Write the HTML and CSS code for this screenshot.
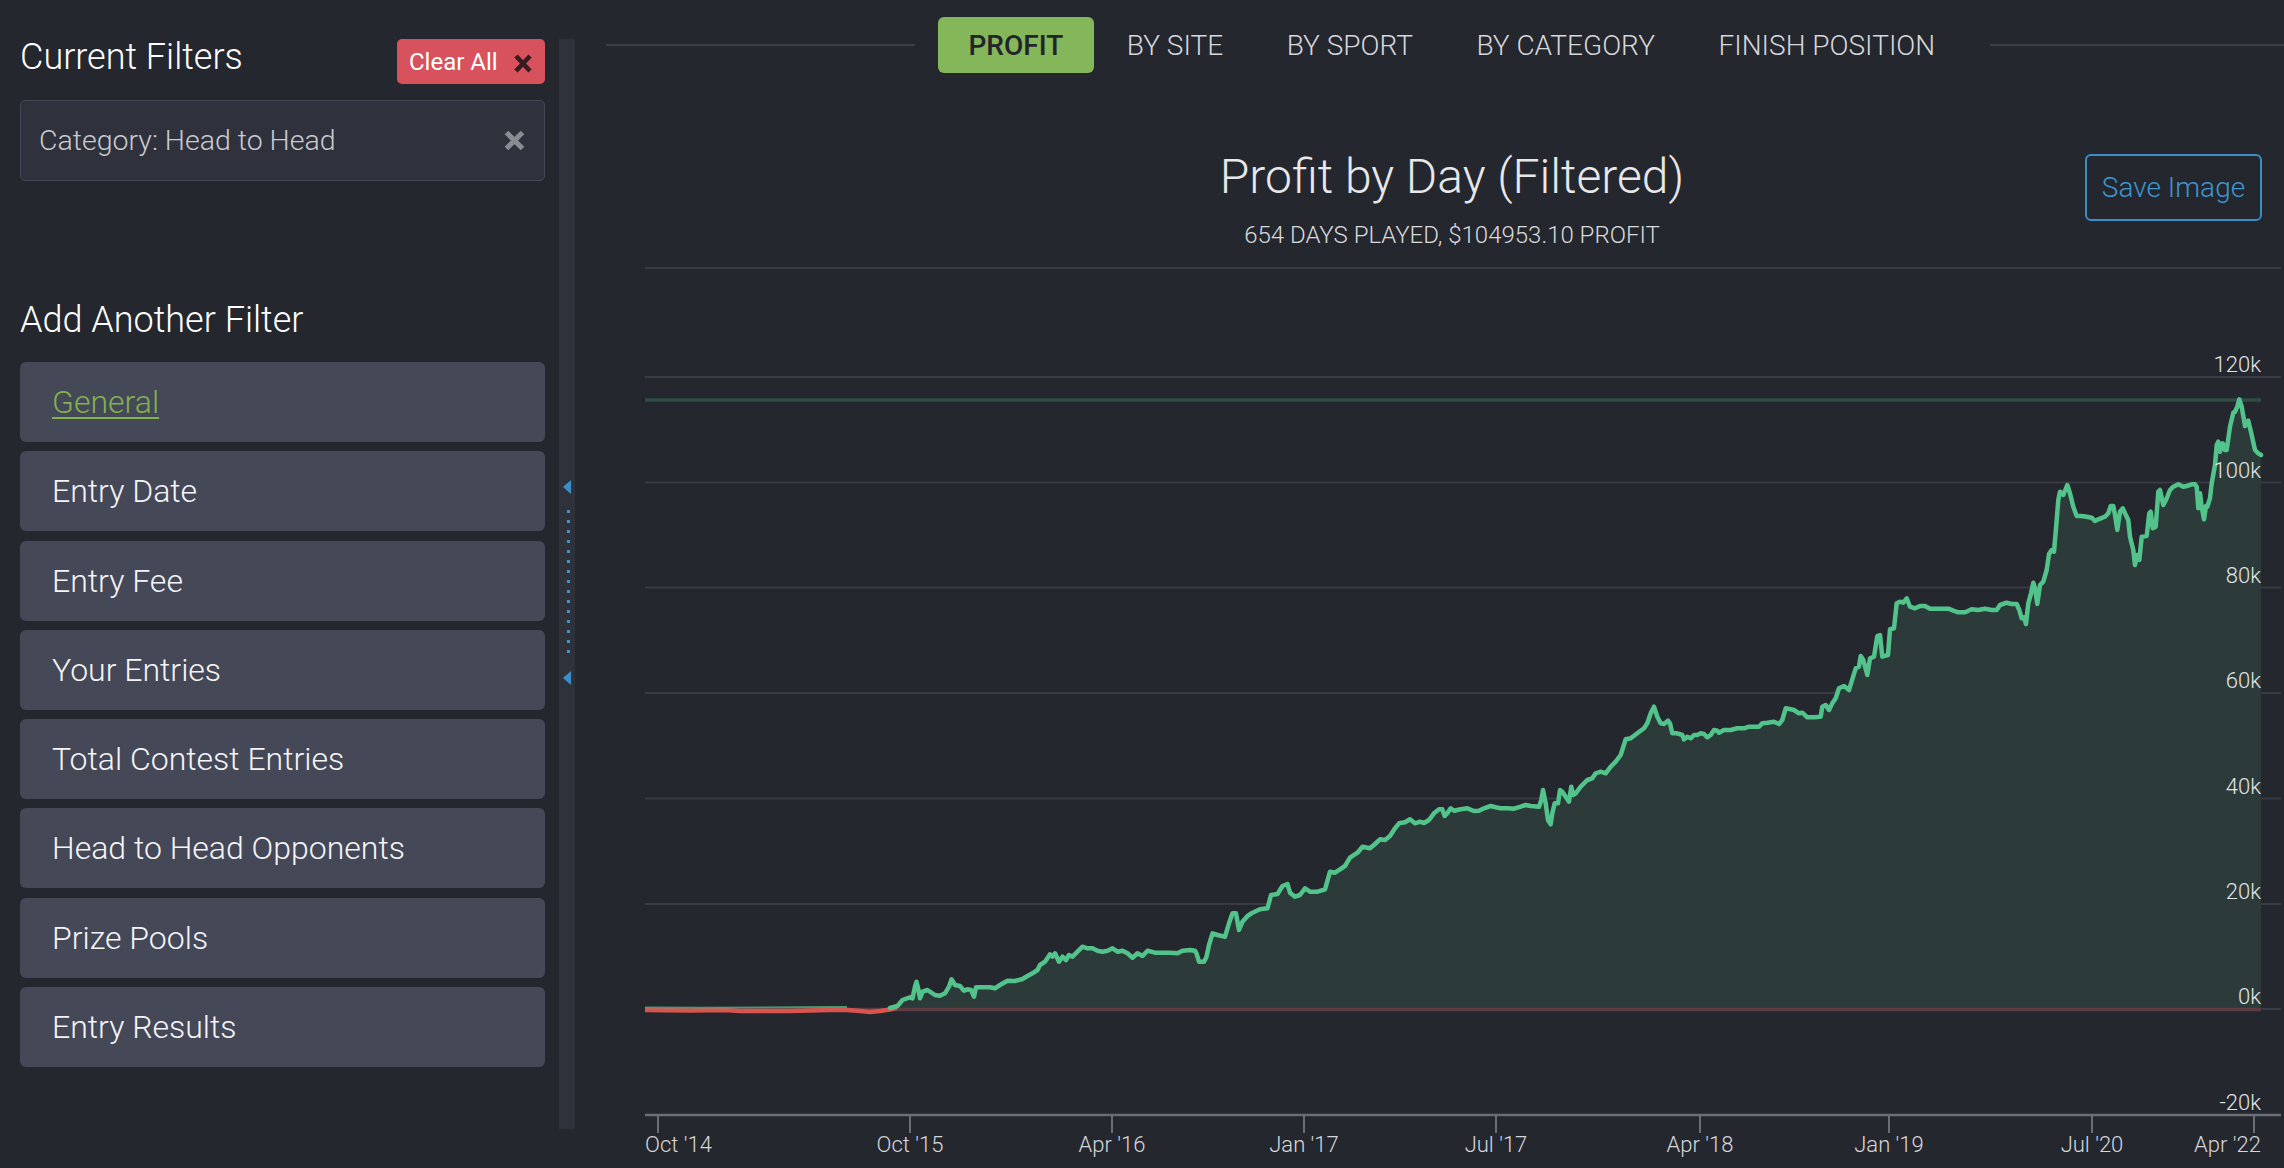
FILE: index.html
```html
<!DOCTYPE html>
<html>
<head>
<meta charset="utf-8">
<title>Profit by Day</title>
<link rel="stylesheet" href="styles.css">
</head>
<body>
<div class="app">
  <aside class="sidebar">
    <div class="filters-head">
      <h2 class="side-title">Current Filters</h2>
      <button class="btn-clear">Clear All
        <svg class="clear-x" width="18" height="19" viewBox="0 0 18 19"><path d="M2 2 L16 17 M16 2 L2 17" stroke="#3a1b22" stroke-width="4.6" fill="none"/></svg>
      </button>
    </div>
    <div class="filter-chip">
      <span>Category: Head to Head</span>
      <svg width="21" height="21" viewBox="0 0 21 21"><path d="M2.5 2.5 L18.5 18.5 M18.5 2.5 L2.5 18.5" stroke="#8a8c93" stroke-width="5.2" fill="none"/></svg>
    </div>
    <h2 class="side-title add-title">Add Another Filter</h2>
    <div class="filter-list">
      <div class="filter-btn"><span class="link">General</span></div>
      <div class="filter-btn">Entry Date</div>
      <div class="filter-btn">Entry Fee</div>
      <div class="filter-btn">Your Entries</div>
      <div class="filter-btn">Total Contest Entries</div>
      <div class="filter-btn">Head to Head Opponents</div>
      <div class="filter-btn">Prize Pools</div>
      <div class="filter-btn">Entry Results</div>
    </div>
  </aside>
  <div class="splitter">
    <span class="tri"></span>
    <span class="dots"></span>
    <span class="tri tri2"></span>
  </div>
  <main class="main">
    <nav class="nav">
      <span class="nav-line left"></span>
      <span class="nav-item active">Profit</span>
      <span class="nav-item">By Site</span>
      <span class="nav-item">By Sport</span>
      <span class="nav-item">By Category</span>
      <span class="nav-item">Finish Position</span>
      <span class="nav-line right"></span>
    </nav>
    <section class="chart-wrap">
      <div class="chart-head">
        <div class="chart-titles">
          <div class="chart-title">Profit by Day (Filtered)</div>
          <div class="chart-sub">654 DAYS PLAYED, $104953.10 PROFIT</div>
        </div>
        <button class="save-btn">Save Image</button>
      </div>
      <svg class="chart" width="1664" height="918" viewBox="620 250 1664 918">
        <g stroke="#393b44" stroke-width="2">
          <line x1="645" y1="268" x2="2281" y2="268"/>
          <line x1="645" y1="377" x2="2281" y2="377"/>
          <line x1="645" y1="482.5" x2="2281" y2="482.5"/>
          <line x1="645" y1="587.5" x2="2281" y2="587.5"/>
          <line x1="645" y1="693" x2="2281" y2="693"/>
          <line x1="645" y1="798.5" x2="2281" y2="798.5"/>
          <line x1="645" y1="904" x2="2281" y2="904"/>
          <line x1="645" y1="1009" x2="2281" y2="1009"/>
        </g>
        <path fill="#2c3b3a" d="M645,1009 L645,1008 690,1008.5 725,1008 740,1009 790,1009 830,1008 847,1008 860,1009.5 870,1010 880,1009.5 890,1008 897.5,1006 902.5,1000 910,997.3 912.5,998.3 915,986.7 916.5,981.7 918.5,990 920,998.3 922.5,991.7 927.5,990 935,995 940,995.7 945,993.3 949,986.7 951.5,979.3 955,985 960,986 964,990.7 967.5,989.3 971,990 974,996.7 976,987.3 982.5,987.3 990,987.3 995,988.3 1000,985 1007.5,980.7 1015,981 1022.5,979 1027.5,976 1032.5,973.3 1037.5,970 1040,965 1045,961.7 1050,954.3 1052.5,956.7 1055,953.3 1059,961.7 1062.5,956.7 1066,960 1069,955 1072.5,956.7 1077.5,951.7 1082.5,946.7 1087.5,948.3 1092.5,948.3 1097.5,950.7 1102.5,951.7 1107.5,950.7 1112.5,948.3 1117.5,951.7 1122.5,950.7 1127.5,953.3 1132.5,957.7 1137.5,953.3 1142.5,956 1147.5,950.7 1155,952.7 1170,952.7 1177.5,953.3 1182.5,950.7 1190,950 1195,950.7 1196.5,953.3 1199,961.7 1204,961.7 1206.5,956.7 1209,945 1212.5,933.3 1217.5,935 1225,936.7 1229,923.3 1232.5,913.3 1236,913.3 1239,930 1242.5,921.7 1247.5,916 1252.5,912.7 1260,909.3 1267.5,908.3 1271,895 1277.5,894 1282.5,886 1287.5,884 1290,892.7 1295,896.7 1300,895 1305,888.3 1310,891.7 1317.5,891.7 1325,889.3 1330,871.7 1335,872.7 1340,869.3 1345,866 1350,857.7 1357.5,852.7 1362.5,846.7 1370,848.3 1375,844 1380,839.3 1385,840 1390,836 1395,828.3 1399,823.3 1405,822.3 1410,819.3 1415,823.3 1420,821.7 1424,823 1429,820 1434,813.3 1439,809.3 1442.3,809.3 1444.7,816 1447.3,813.3 1450.7,808.3 1454,810.7 1460.7,809.3 1467.3,808.3 1474,811 1479,810.7 1484,808.3 1490.7,806 1495.7,807.3 1500.7,808.3 1507.3,808.3 1514,808.7 1520.7,806.7 1525.7,805 1530.7,806 1539,806.7 1541.3,800 1543,790 1545.7,803.3 1548,820 1550.7,824.3 1552.3,813.3 1554.7,803.3 1558,803.3 1560,790 1562.3,791.7 1565.7,796.7 1569,801.7 1571.3,786.7 1573.3,795 1575.7,793.3 1580.7,786.7 1587.3,780 1592.3,778.3 1595.7,773.3 1600.7,771.7 1605.7,773.3 1610.7,766.7 1615.7,761.7 1620.7,755 1625.7,739.3 1630.7,738.3 1637.3,733.3 1644,728.3 1647.3,723.3 1650.7,713.3 1654,706.7 1657.3,716.7 1660.7,723.3 1664,724 1668,720.7 1670,723.3 1672.3,733.3 1677.3,733.3 1682.3,735 1684,739.3 1687.3,736.7 1690.7,738.3 1694,735 1697.3,735 1700.7,733.3 1704,734 1707.3,737.3 1710.7,735 1714,730 1717.3,730.7 1719,732.7 1724,730 1730.7,730 1737.3,728.3 1744,728.3 1749,726.7 1754,726.7 1759,726.7 1762.3,723.3 1767.3,722.7 1774,721.7 1779,724 1782.3,720 1785.7,708.3 1790.7,709.3 1794,710 1799,713.3 1802.3,712.7 1807.3,717.3 1814,717.3 1820.7,716.7 1822.3,706.7 1825.7,705 1829,710 1832.3,703.3 1835.7,698.3 1839,688.3 1844,686 1849,690 1852.3,679.3 1855.7,668.3 1859,666.7 1860.7,656 1863.3,660 1867.3,675 1870,658.3 1874,656.7 1877.3,636 1880,635 1882.3,656.7 1888,655 1890,629.3 1894,628.3 1896.7,603.3 1900,601.7 1903.3,602.7 1906.7,598.3 1910,606.7 1915,608.3 1920,606 1925,606 1930,608.7 1936.7,608.7 1943.3,608.7 1948.3,608.7 1953.3,610.7 1958.3,612.3 1965,612.3 1971.7,609.3 1978.3,610 1985,608.7 1991.7,610 1996.7,610 2000,605 2006.7,602.7 2011.7,604 2016.7,604 2019.3,610 2021.7,618.3 2024,617.3 2026,624 2028.3,603.3 2031,593.3 2033.3,582.7 2035,588.3 2037.3,604 2040,585 2043.3,581.7 2046.7,570 2049,554 2051.7,550 2054,551.7 2056.7,520 2058.3,500 2060,491.7 2063.3,495 2067.3,485 2070,493.3 2073.3,506.7 2076.7,516 2081.7,516 2086.7,516.7 2091.7,517.7 2095,521 2098.3,519.3 2105,516.7 2108.3,513.3 2110.7,506 2113.3,506 2115,515 2117.3,530 2120,511.7 2122.7,508.3 2125,513.3 2128.3,520 2130,536.7 2133.3,550 2135,565 2137.3,555 2139.3,560 2141.7,536.7 2146.7,536 2149.3,513.3 2150.7,511.7 2152.7,528.3 2155.7,526.7 2158.3,491.7 2160,490 2163.3,505 2166,500 2170,490 2173.3,486.7 2178.3,484.3 2183.3,486.7 2186.7,486 2191.7,484.3 2195,484.3 2196.7,486.7 2198.3,508.3 2200,493.3 2201.7,506.7 2204,519.3 2206,506 2207.3,506.7 2210,498.3 2211.7,483.3 2215,465 2216.7,445 2218.3,441.7 2220,451.7 2222.7,443.3 2225,450 2226.7,450 2230,426.7 2233.3,412.7 2235,411.7 2237.3,406.7 2239.3,399.3 2241.7,406.7 2245,426 2248.3,420.7 2251.7,435 2255,450 2258.3,453.3 2261,455 L2261,1009 Z"/>
        <line x1="645" y1="400" x2="2261" y2="400" stroke="#2f4d43" stroke-width="3.5"/>
        <line x1="645" y1="1009.5" x2="2261" y2="1009.5" stroke="#5c3c42" stroke-width="3.5"/>
        <polyline fill="none" stroke="#d9544f" stroke-width="4.5" stroke-linejoin="round" points="645,1010 690,1010.5 725,1010 740,1011 790,1011 830,1010 847,1010 860,1011 870,1012 880,1011 890,1009.5 897,1007.5"/>
        <polyline fill="none" stroke="#52c48b" stroke-width="1.8" opacity="0.7" points="645,1007.3 700,1007.6 760,1007.3 830,1007 847,1007"/>
        <polyline fill="none" stroke="#52c48b" stroke-width="4.5" stroke-linejoin="round" stroke-linecap="round" points="890,1008 897.5,1006 902.5,1000 910,997.3 912.5,998.3 915,986.7 916.5,981.7 918.5,990 920,998.3 922.5,991.7 927.5,990 935,995 940,995.7 945,993.3 949,986.7 951.5,979.3 955,985 960,986 964,990.7 967.5,989.3 971,990 974,996.7 976,987.3 982.5,987.3 990,987.3 995,988.3 1000,985 1007.5,980.7 1015,981 1022.5,979 1027.5,976 1032.5,973.3 1037.5,970 1040,965 1045,961.7 1050,954.3 1052.5,956.7 1055,953.3 1059,961.7 1062.5,956.7 1066,960 1069,955 1072.5,956.7 1077.5,951.7 1082.5,946.7 1087.5,948.3 1092.5,948.3 1097.5,950.7 1102.5,951.7 1107.5,950.7 1112.5,948.3 1117.5,951.7 1122.5,950.7 1127.5,953.3 1132.5,957.7 1137.5,953.3 1142.5,956 1147.5,950.7 1155,952.7 1170,952.7 1177.5,953.3 1182.5,950.7 1190,950 1195,950.7 1196.5,953.3 1199,961.7 1204,961.7 1206.5,956.7 1209,945 1212.5,933.3 1217.5,935 1225,936.7 1229,923.3 1232.5,913.3 1236,913.3 1239,930 1242.5,921.7 1247.5,916 1252.5,912.7 1260,909.3 1267.5,908.3 1271,895 1277.5,894 1282.5,886 1287.5,884 1290,892.7 1295,896.7 1300,895 1305,888.3 1310,891.7 1317.5,891.7 1325,889.3 1330,871.7 1335,872.7 1340,869.3 1345,866 1350,857.7 1357.5,852.7 1362.5,846.7 1370,848.3 1375,844 1380,839.3 1385,840 1390,836 1395,828.3 1399,823.3 1405,822.3 1410,819.3 1415,823.3 1420,821.7 1424,823 1429,820 1434,813.3 1439,809.3 1442.3,809.3 1444.7,816 1447.3,813.3 1450.7,808.3 1454,810.7 1460.7,809.3 1467.3,808.3 1474,811 1479,810.7 1484,808.3 1490.7,806 1495.7,807.3 1500.7,808.3 1507.3,808.3 1514,808.7 1520.7,806.7 1525.7,805 1530.7,806 1539,806.7 1541.3,800 1543,790 1545.7,803.3 1548,820 1550.7,824.3 1552.3,813.3 1554.7,803.3 1558,803.3 1560,790 1562.3,791.7 1565.7,796.7 1569,801.7 1571.3,786.7 1573.3,795 1575.7,793.3 1580.7,786.7 1587.3,780 1592.3,778.3 1595.7,773.3 1600.7,771.7 1605.7,773.3 1610.7,766.7 1615.7,761.7 1620.7,755 1625.7,739.3 1630.7,738.3 1637.3,733.3 1644,728.3 1647.3,723.3 1650.7,713.3 1654,706.7 1657.3,716.7 1660.7,723.3 1664,724 1668,720.7 1670,723.3 1672.3,733.3 1677.3,733.3 1682.3,735 1684,739.3 1687.3,736.7 1690.7,738.3 1694,735 1697.3,735 1700.7,733.3 1704,734 1707.3,737.3 1710.7,735 1714,730 1717.3,730.7 1719,732.7 1724,730 1730.7,730 1737.3,728.3 1744,728.3 1749,726.7 1754,726.7 1759,726.7 1762.3,723.3 1767.3,722.7 1774,721.7 1779,724 1782.3,720 1785.7,708.3 1790.7,709.3 1794,710 1799,713.3 1802.3,712.7 1807.3,717.3 1814,717.3 1820.7,716.7 1822.3,706.7 1825.7,705 1829,710 1832.3,703.3 1835.7,698.3 1839,688.3 1844,686 1849,690 1852.3,679.3 1855.7,668.3 1859,666.7 1860.7,656 1863.3,660 1867.3,675 1870,658.3 1874,656.7 1877.3,636 1880,635 1882.3,656.7 1888,655 1890,629.3 1894,628.3 1896.7,603.3 1900,601.7 1903.3,602.7 1906.7,598.3 1910,606.7 1915,608.3 1920,606 1925,606 1930,608.7 1936.7,608.7 1943.3,608.7 1948.3,608.7 1953.3,610.7 1958.3,612.3 1965,612.3 1971.7,609.3 1978.3,610 1985,608.7 1991.7,610 1996.7,610 2000,605 2006.7,602.7 2011.7,604 2016.7,604 2019.3,610 2021.7,618.3 2024,617.3 2026,624 2028.3,603.3 2031,593.3 2033.3,582.7 2035,588.3 2037.3,604 2040,585 2043.3,581.7 2046.7,570 2049,554 2051.7,550 2054,551.7 2056.7,520 2058.3,500 2060,491.7 2063.3,495 2067.3,485 2070,493.3 2073.3,506.7 2076.7,516 2081.7,516 2086.7,516.7 2091.7,517.7 2095,521 2098.3,519.3 2105,516.7 2108.3,513.3 2110.7,506 2113.3,506 2115,515 2117.3,530 2120,511.7 2122.7,508.3 2125,513.3 2128.3,520 2130,536.7 2133.3,550 2135,565 2137.3,555 2139.3,560 2141.7,536.7 2146.7,536 2149.3,513.3 2150.7,511.7 2152.7,528.3 2155.7,526.7 2158.3,491.7 2160,490 2163.3,505 2166,500 2170,490 2173.3,486.7 2178.3,484.3 2183.3,486.7 2186.7,486 2191.7,484.3 2195,484.3 2196.7,486.7 2198.3,508.3 2200,493.3 2201.7,506.7 2204,519.3 2206,506 2207.3,506.7 2210,498.3 2211.7,483.3 2215,465 2216.7,445 2218.3,441.7 2220,451.7 2222.7,443.3 2225,450 2226.7,450 2230,426.7 2233.3,412.7 2235,411.7 2237.3,406.7 2239.3,399.3 2241.7,406.7 2245,426 2248.3,420.7 2251.7,435 2255,450 2258.3,453.3 2261,455"/>
        <g class="ylab" text-anchor="end">
          <text x="2261" y="372">120k</text>
          <text x="2261" y="477.5">100k</text>
          <text x="2261" y="582.5">80k</text>
          <text x="2261" y="688">60k</text>
          <text x="2261" y="793.5">40k</text>
          <text x="2261" y="899">20k</text>
          <text x="2261" y="1004">0k</text>
          <text x="2261" y="1110">-20k</text>
        </g>
        <line x1="645" y1="1115" x2="2281" y2="1115" stroke="#6c6e75" stroke-width="2.5"/>
        <g stroke="#6c6e75" stroke-width="2">
          <line x1="658" y1="1115" x2="658" y2="1133"/>
          <line x1="910" y1="1115" x2="910" y2="1133"/>
          <line x1="1112" y1="1115" x2="1112" y2="1133"/>
          <line x1="1304" y1="1115" x2="1304" y2="1133"/>
          <line x1="1496" y1="1115" x2="1496" y2="1133"/>
          <line x1="1700" y1="1115" x2="1700" y2="1133"/>
          <line x1="1889" y1="1115" x2="1889" y2="1133"/>
          <line x1="2092" y1="1115" x2="2092" y2="1133"/>
          <line x1="2254" y1="1115" x2="2254" y2="1133"/>
        </g>
        <g class="xlab" text-anchor="middle">
          <text x="645" y="1152" text-anchor="start">Oct '14</text>
          <text x="910" y="1152">Oct '15</text>
          <text x="1112" y="1152">Apr '16</text>
          <text x="1304" y="1152">Jan '17</text>
          <text x="1496" y="1152">Jul '17</text>
          <text x="1700" y="1152">Apr '18</text>
          <text x="1889" y="1152">Jan '19</text>
          <text x="2092" y="1152">Jul '20</text>
          <text x="2261" y="1152" text-anchor="end">Apr '22</text>
        </g>
      </svg>
    </section>
  </main>
</div>
</body>
</html>
```
FILE: styles.css
```css
* { box-sizing: border-box; }
html, body { margin: 0; padding: 0; }
body {
  background: #25272e;
  color: #ffffff;
  font-family: Roboto, "Noto Sans", "Liberation Sans", sans-serif;
  overflow: hidden;
}
.app {
  display: flex;
  width: 2284px;
  height: 1168px;
}

/* sidebar */
.sidebar {
  flex: none;
  width: 559px;
  padding: 37px 14px 0 20px;
}
.filters-head {
  display: flex;
  justify-content: space-between;
  align-items: flex-start;
  height: 47px;
}
.side-title {
  margin: 0;
  font-size: 36px;
  line-height: 41px;
  font-weight: 300;
  color: #ffffff;
}
.btn-clear {
  margin-top: 2px;
  width: 148px;
  height: 45px;
  display: flex;
  align-items: center;
  gap: 16px;
  padding: 0 0 0 12px;
  border: none;
  border-radius: 5px;
  background: #d8525d;
  color: #ffffff;
  font-family: Roboto, "Noto Sans", sans-serif;
  font-size: 24px;
  font-weight: 400;
}
.clear-x { margin-top: 3px; }
.filter-chip {
  margin-top: 16px;
  height: 81px;
  display: flex;
  align-items: center;
  justify-content: space-between;
  padding: 0 19px 0 18px;
  border: 1.5px solid #444755;
  border-radius: 5px;
  background: #2f313c;
  font-size: 28.5px;
  font-weight: 300;
  color: #c9cbd0;
}
.add-title { margin-top: 119px; }
.filter-list {
  margin-top: 21px;
  display: flex;
  flex-direction: column;
  gap: 9.3px;
}
.filter-btn {
  height: 80px;
  display: flex;
  align-items: center;
  padding-left: 32px;
  border-radius: 6px;
  background: #444857;
  font-size: 32px;
  font-weight: 300;
  color: #f5f5f7;
}
.link {
  color: #80b24f;
  text-decoration: underline;
  text-decoration-thickness: 2px;
  text-underline-offset: 4px;
}

/* splitter */
.splitter {
  flex: none;
  width: 16px;
  height: 1090px;
  margin-top: 39px;
  padding-top: 441px;
  background: #2f313b;
  display: flex;
  flex-direction: column;
  align-items: center;
}
.tri {
  width: 0;
  height: 0;
  margin-left: -1px;
  border-top: 7.5px solid transparent;
  border-bottom: 7.5px solid transparent;
  border-right: 8px solid #3b8fc9;
}
.dots {
  width: 3px;
  height: 144px;
  margin-top: 16px;
  margin-left: 2px;
  background: repeating-linear-gradient(to bottom, #3d95d2 0 3px, transparent 3px 10px);
}
.tri2 { margin-top: 17px; }

/* main */
.main {
  flex: 1;
  min-width: 0;
  padding-top: 17px;
}
.nav {
  display: flex;
  align-items: center;
  height: 56px;
}
.nav-line {
  height: 2px;
  background: #3c3f4a;
}
.nav-line.left {
  flex: none;
  width: 309px;
  margin-left: 31px;
  margin-right: 23px;
}
.nav-line.right {
  flex: 1;
  margin-left: 24px;
}
.nav-item {
  height: 56px;
  display: flex;
  align-items: center;
  padding: 0 30.5px;
  border-radius: 6px;
  font-size: 28px;
  font-weight: 300;
  color: #d6d7db;
  text-transform: uppercase;
  white-space: nowrap;
}
.nav-item + .nav-item { margin-left: 2.5px; }
.nav-item.active {
  background: #84b65a;
  color: #23252b;
  font-weight: 500;
}

.chart-wrap {
  width: 1664px;
  margin-left: 45px;
}
.chart-head {
  margin-top: 76px;
  height: 101px;
  display: grid;
  grid-template-columns: 1fr auto 1fr;
}
.chart-titles {
  grid-column: 2;
  text-align: center;
}
.chart-title {
  font-size: 48px;
  line-height: 56px;
  font-weight: 300;
  color: #e8e8ea;
}
.chart-sub {
  margin-top: 16px;
  font-size: 24px;
  line-height: 29px;
  font-weight: 300;
  color: #d9dadd;
}
.save-btn {
  grid-column: 3;
  justify-self: end;
  align-self: start;
  margin-top: 5px;
  margin-right: 22px;
  width: 177px;
  height: 67px;
  border: 2px solid #3a8ec6;
  border-radius: 6px;
  background: transparent;
  color: #3d95d1;
  font-family: Roboto, "Noto Sans", sans-serif;
  font-size: 28px;
  font-weight: 300;
}
.chart { display: block; }
.ylab text {
  font-family: Roboto, "Noto Sans", sans-serif;
  font-size: 22px;
  font-weight: 300;
  fill: #e2e3e6;
}
.xlab text {
  font-family: Roboto, "Noto Sans", sans-serif;
  font-size: 22px;
  font-weight: 300;
  fill: #d6d7db;
}
```
